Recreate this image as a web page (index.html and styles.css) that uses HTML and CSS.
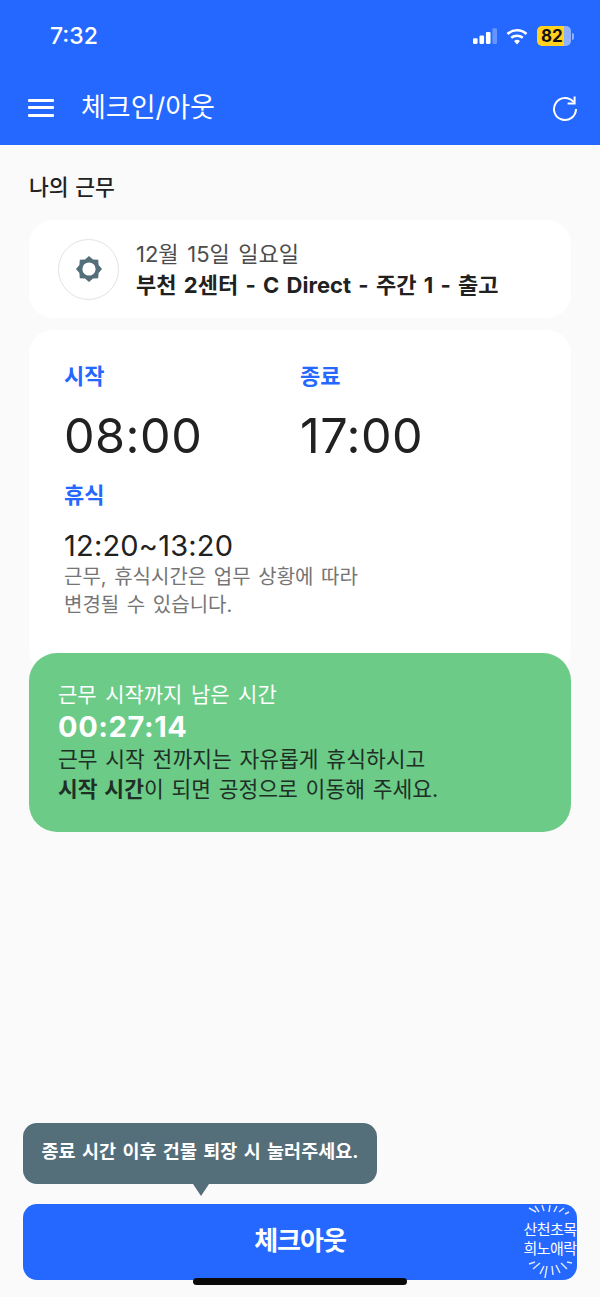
FILE: index.html
```html
<!DOCTYPE html>
<html lang="ko">
<head>
    <meta charset="UTF-8">
    <meta name="viewport" content="width=device-width, initial-scale=1.0">
    <title>체크인/아웃</title>
    <link rel="stylesheet" href="styles.css">
</head>
<body>
    <div class="top">
        <div class="status-bar">
            <span class="clock">7:32</span>
            <div class="status-icons">
                <svg class="signal" width="24" height="17" viewBox="0 0 26 18">
                    <rect x="0" y="11" width="5" height="6" rx="1.2" fill="#fff"/>
                    <rect x="7" y="8" width="5" height="9" rx="1.2" fill="#fff"/>
                    <rect x="14" y="4" width="5" height="13" rx="1.2" fill="#fff"/>
                    <rect x="21" y="0" width="5" height="17" rx="1.2" fill="#fff" opacity="0.3"/>
                </svg>
                <svg class="wifi" width="22" height="17" viewBox="0 0 22 17">
                    <path d="M1.5 6 A14 14 0 0 1 20.5 6" fill="none" stroke="#fff" stroke-width="2.6"/>
                    <path d="M5.2 9.8 A9 9 0 0 1 16.8 9.8" fill="none" stroke="#fff" stroke-width="2.6"/>
                    <path d="M8 13 L11 16.5 L14 13 A4.5 4.5 0 0 0 8 13 Z" fill="#fff"/>
                </svg>
                <div class="battery">
                    <span class="battery-level">82</span>
                    <span class="battery-rest"></span>
                    <span class="battery-tip"></span>
                </div>
            </div>
        </div>
        <header class="app-bar">
            <div class="menu-icon"><span></span><span></span><span></span></div>
            <h1>체크인/아웃</h1>
            <svg class="refresh" width="28" height="28" viewBox="0 0 28 28">
                <path d="M22.6 8.2 A11 11 0 1 0 25 15" fill="none" stroke="#fff" stroke-width="2"/>
                <path d="M23.6 2.4 V9.4 H16.6" fill="none" stroke="#fff" stroke-width="2"/>
            </svg>
        </header>
    </div>

    <main class="content">
        <h2 class="section-title">나의 근무</h2>

        <div class="card shift-card">
            <div class="shift-icon">
                <svg width="28" height="28" viewBox="0 0 28 28">
                    <path d="M14 1 L18 4.4 L23.2 4.8 L23.6 10 L27 14 L23.6 18 L23.2 23.2 L18 23.6 L14 27 L10 23.6 L4.8 23.2 L4.4 18 L1 14 L4.4 10 L4.8 4.8 L10 4.4 Z" fill="#546e7a"/>
                    <circle cx="14" cy="14" r="6.6" fill="#fff"/>
                </svg>
            </div>
            <div class="shift-text">
                <div class="shift-date">12월 15일 일요일</div>
                <div class="shift-name">부천 2센터 - C Direct - 주간 1 - 출고</div>
            </div>
        </div>

        <div class="card time-card">
            <div class="time-grid">
                <div class="time-col">
                    <div class="time-label">시작</div>
                    <div class="time-value">08:00</div>
                </div>
                <div class="time-col">
                    <div class="time-label">종료</div>
                    <div class="time-value">17:00</div>
                </div>
            </div>
            <div class="time-label break-label">휴식</div>
            <div class="break-value">12:20~13:20</div>
            <p class="time-note">근무, 휴식시간은 업무 상황에 따라<br>변경될 수 있습니다.</p>
        </div>

        <div class="countdown">
            <div class="countdown-title">근무 시작까지 남은 시간</div>
            <div class="countdown-time">00:27:14</div>
            <p class="countdown-text">근무 시작 전까지는 자유롭게 휴식하시고<br><b>시작 시간</b>이 되면 공정으로 이동해 주세요.</p>
        </div>
    </main>

    <div class="bottom">
        <div class="tooltip">종료 시간 이후 건물 퇴장 시 눌러주세요.</div>
        <button class="checkout">체크아웃</button>
        <div class="burst">
            <svg class="rays" width="54" height="76" viewBox="0 0 54 76">
                <path d="M6 4 L13 8 M12 2 L16 8 M19 1 L21 7 M27 1 L26 8 M34 2 L31 8 M41 4 L36 8 M46 8 L42 10" stroke="#dbe6ff" stroke-width="1.5" fill="none"/>
                <path d="M6 60 L12 58 M10 65 L17 59 M17 70 L21 62 M22 74 L24 62 M30 71 L29 62 M37 69 L33 61 M44 65 L38 59 M49 59 L44 58" stroke="#dbe6ff" stroke-width="1.5" fill="none"/>
            </svg>
            <div class="burst-text">산천초목<br>희노애락</div>
        </div>
    </div>
    <div class="home-bar"></div>
</body>
</html>
```

FILE: styles.css
```css
* {
    margin: 0;
    padding: 0;
    box-sizing: border-box;
}

body {
    position: relative;
    width: 600px;
    height: 1297px;
    overflow: hidden;
    background-color: #fafafa;
    color: #212121;
    font-family: 'Inter', 'Noto Sans CJK KR', sans-serif;
}

.top {
    height: 145px;
    background-color: #2468ff;
    color: #fff;
}

.status-bar {
    display: flex;
    justify-content: space-between;
    align-items: center;
    height: 72px;
    padding: 0 26px 0 50px;
}

.clock {
    font-size: 23px;
    font-weight: 500;
}

.status-icons {
    display: flex;
    align-items: center;
    gap: 9px;
}

.battery {
    display: flex;
    align-items: center;
    height: 20px;
}

.battery-level {
    width: 27px;
    height: 20px;
    line-height: 20px;
    padding-left: 4px;
    background-color: #ffd21f;
    border-radius: 5px 0 0 5px;
    color: #111;
    font-size: 17px;
    font-weight: 700;
}

.battery-rest {
    width: 7px;
    height: 20px;
    background-color: #8fb2ff;
    border-radius: 0 5px 5px 0;
}

.battery-tip {
    width: 2px;
    height: 7px;
    margin-left: 1px;
    background-color: #8fb2ff;
    border-radius: 0 2px 2px 0;
}

.app-bar {
    display: flex;
    align-items: center;
    height: 73px;
    padding: 0 21px 2px 28px;
}

.menu-icon {
    display: flex;
    flex-direction: column;
    gap: 4.5px;
    width: 26px;
}

.menu-icon span {
    height: 3px;
    background-color: #fff;
    border-radius: 1px;
}

.app-bar h1 {
    flex: 1;
    margin: 0 0 5px 27px;
    font-size: 27px;
    font-weight: 400;
}

.content {
    padding: 29px 29px 0;
}

.section-title {
    height: 46px;
    font-size: 21.5px;
    font-weight: 500;
    line-height: 26px;
    word-spacing: 1px;
}

.card {
    background-color: #fff;
    border-radius: 24px;
}

.shift-card {
    display: flex;
    align-items: center;
    gap: 17px;
    height: 98px;
    padding-left: 29px;
}

.shift-icon {
    display: flex;
    justify-content: center;
    align-items: center;
    width: 61px;
    height: 61px;
    border: 1px solid #e3e3e3;
    border-radius: 50%;
}

.shift-date {
    color: #4c4c4c;
    font-size: 22px;
    line-height: 32px;
    word-spacing: 2.4px;
}

.shift-name {
    margin-top: -1px;
    font-size: 22px;
    font-weight: 700;
    line-height: 32px;
    word-spacing: 2.1px;
}

.time-card {
    height: 345px;
    margin-top: 12px;
    padding: 28px 35px 0;
}

.time-grid {
    display: flex;
}

.time-col {
    width: 236px;
}

.time-label {
    color: #2468ff;
    font-size: 22px;
    font-weight: 700;
    line-height: 36px;
}

.time-value {
    margin-top: 13px;
    font-size: 48.5px;
    letter-spacing: 0.5px;
    line-height: 58px;
}

.break-label {
    margin-top: 12px;
}

.break-value {
    margin-top: 15px;
    font-size: 29px;
    letter-spacing: 0.2px;
    line-height: 36px;
}

.time-note {
    margin-top: -1px;
    color: #757575;
    font-size: 20px;
    line-height: 28px;
    word-spacing: 2px;
}

.countdown {
    position: relative;
    height: 179px;
    margin-top: -22px;
    padding: 26px 29px 0;
    background-color: #6bcb87;
    border-radius: 28px;
    color: #1f2f26;
}

.countdown-title {
    color: #fff;
    font-size: 21px;
    line-height: 32px;
    word-spacing: 2.6px;
}

.countdown-time {
    color: #fff;
    font-size: 29px;
    font-weight: 700;
    line-height: 32px;
    letter-spacing: 0.6px;
}

.countdown-text {
    margin-top: 1px;
    font-size: 21.5px;
    line-height: 30px;
    word-spacing: 1.7px;
}

.bottom {
    position: absolute;
    left: 23px;
    right: 23px;
    top: 1123px;
}

.tooltip {
    position: relative;
    width: 354px;
    height: 61px;
    background-color: #546e7a;
    border-radius: 14px;
    color: #fff;
    font-size: 18.5px;
    font-weight: 700;
    line-height: 56px;
    text-align: center;
    word-spacing: 2px;
}

.tooltip::after {
    content: "";
    position: absolute;
    left: 170px;
    top: 61px;
    border-top: 12px solid #546e7a;
    border-left: 8px solid transparent;
    border-right: 8px solid transparent;
}

.checkout {
    display: block;
    width: 554px;
    height: 76px;
    margin-top: 20px;
    padding-bottom: 8px;
    background-color: #2468ff;
    border: none;
    border-radius: 14px;
    color: #fff;
    font-family: inherit;
    font-size: 26px;
    font-weight: 700;
    letter-spacing: -1px;
}

.burst {
    position: absolute;
    right: 0;
    top: 81px;
    width: 54px;
    height: 76px;
    padding-top: 16px;
    color: #fff;
    font-size: 15px;
    line-height: 19px;
    text-align: center;
    white-space: nowrap;
}

.burst-text {
    letter-spacing: -0.6px;
}

.rays {
    position: absolute;
    left: 0;
    top: 0;
}

.home-bar {
    position: absolute;
    left: 193px;
    top: 1278px;
    width: 214px;
    height: 7px;
    background-color: #0a0a0a;
    border-radius: 4px;
}
```
